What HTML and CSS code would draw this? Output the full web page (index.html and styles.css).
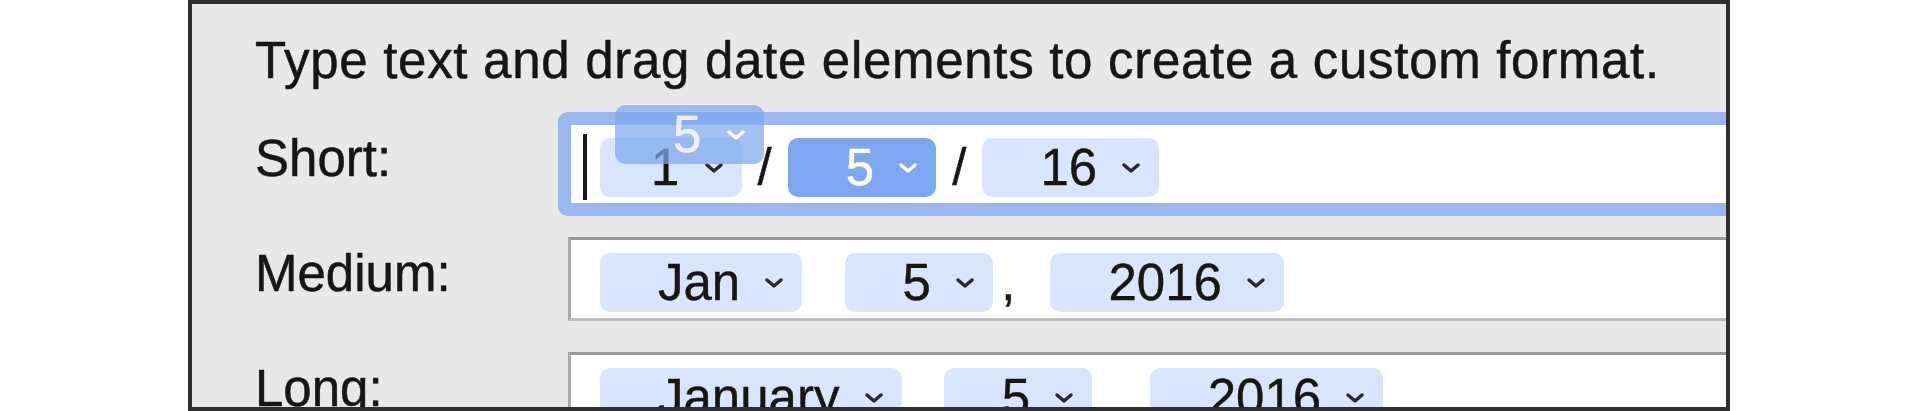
FILE: index.html
```html
<!DOCTYPE html>
<html lang="en">
<head>
    <meta charset="UTF-8">
    <meta name="viewport" content="width=device-width, initial-scale=1.0">
    <title>Date formats</title>
    <link rel="stylesheet" href="styles.css">
</head>
<body>
    <div class="window">
        <p class="hint">Type text and drag date elements to create a custom format.</p>

        <div class="formats">
            <div class="label">Short:</div>
            <div class="field focused">
                <span class="caret"></span>
                <span class="token narrow">1 <svg class="chev" viewBox="0 0 20 12"><path d="M3 3 L10 9 L17 3"/></svg></span>
                <span class="sep slash">/</span>
                <span class="token selected">5 <svg class="chev" viewBox="0 0 20 12"><path d="M3 3 L10 9 L17 3"/></svg></span>
                <span class="sep slash">/</span>
                <span class="token">16 <svg class="chev" viewBox="0 0 20 12"><path d="M3 3 L10 9 L17 3"/></svg></span>
                <!-- token being dragged -->
                <span class="token ghost">5 <svg class="chev" viewBox="0 0 20 12"><path d="M3 3 L10 9 L17 3"/></svg></span>
            </div>

            <div class="label">Medium:</div>
            <div class="field">
                <span class="token">Jan <svg class="chev" viewBox="0 0 20 12"><path d="M3 3 L10 9 L17 3"/></svg></span>
                <span class="sep"> </span>
                <span class="token">5 <svg class="chev" viewBox="0 0 20 12"><path d="M3 3 L10 9 L17 3"/></svg></span>
                <span class="sep comma">, </span>
                <span class="token">2016 <svg class="chev" viewBox="0 0 20 12"><path d="M3 3 L10 9 L17 3"/></svg></span>
            </div>

            <div class="label">Long:</div>
            <div class="field">
                <span class="token">January <svg class="chev" viewBox="0 0 20 12"><path d="M3 3 L10 9 L17 3"/></svg></span>
                <span class="sep"> </span>
                <span class="token">5 <svg class="chev" viewBox="0 0 20 12"><path d="M3 3 L10 9 L17 3"/></svg></span>
                <span class="sep comma">, </span>
                <span class="token">2016 <svg class="chev" viewBox="0 0 20 12"><path d="M3 3 L10 9 L17 3"/></svg></span>
            </div>
        </div>
    </div>
</body>
</html>
```

FILE: styles.css
```css
body {
    margin: 0;
    background-color: #fff;
    font-family: "Liberation Sans", Arial, sans-serif;
    color: #161616;
}
.window {
    box-sizing: border-box;
    width: 1542px;
    height: 411px;
    margin-left: 188px;
    padding: 27px 0 0 63px;
    background-color: #e8e8e8;
    border: 4px solid #2e2e2e;
    overflow: hidden;
}
.hint {
    margin: 0;
    font-size: 51px;
    line-height: 60px;
    letter-spacing: 0.7px;
    white-space: nowrap;
    -webkit-text-stroke: 0.5px #161616;
}
.formats {
    display: grid;
    grid-template-columns: 313px 1fr;
    row-gap: 31px;
    margin-top: 31px;
    margin-right: -40px;
}
.label {
    margin-top: 7px;
    font-size: 51px;
    line-height: 60px;
    -webkit-text-stroke: 0.5px #161616;
}
.field {
    position: relative;
    display: flex;
    align-items: flex-start;
    box-sizing: border-box;
    height: 84px;
    padding: 13px 0 0 15px;
    background-color: #fff;
    border: 3px solid #a9a9a9;
    border-top-color: #9a9a9a;
    border-bottom-color: #bdbdbd;
}
.field.focused {
    border-color: #9ab6f1;
    border-radius: 3px;
    box-shadow: 0 0 0 10px #9ab6f1;
}
.caret {
    position: absolute;
    left: 12px;
    top: 9px;
    width: 4px;
    height: 66px;
    background-color: #1a1a1a;
}
.token {
    display: inline-flex;
    align-items: center;
    height: 59px;
    margin: 0 14px;
    padding: 0 18px 0 58px;
    border-radius: 10px;
    background-color: #d8e5fc;
    font-size: 51px;
    line-height: 59px;
    white-space: pre;
    -webkit-text-stroke: 0.4px currentColor;
}
.token.narrow {
    padding-left: 51px;
}
.token.selected {
    background-color: #7fa6f0;
    color: #fff;
}
.token.ghost {
    position: absolute;
    left: 30px;
    top: -20px;
    background-color: rgba(128, 166, 239, 0.72);
    color: rgba(255, 255, 255, 0.8);
}
.chev {
    width: 20px;
    height: 12px;
    margin-left: 10px;
    fill: none;
    stroke: #2a2a2a;
    stroke-width: 3.5;
    stroke-linecap: round;
    stroke-linejoin: round;
}
.selected .chev,
.ghost .chev {
    stroke: #fff;
}
.sep {
    font-size: 51px;
    line-height: 59px;
    white-space: pre;
    -webkit-text-stroke: 0.4px #161616;
}
.sep.slash {
    margin: 0 2px;
}
.sep.comma {
    margin-left: -6px;
    padding-right: 7px;
}
```
